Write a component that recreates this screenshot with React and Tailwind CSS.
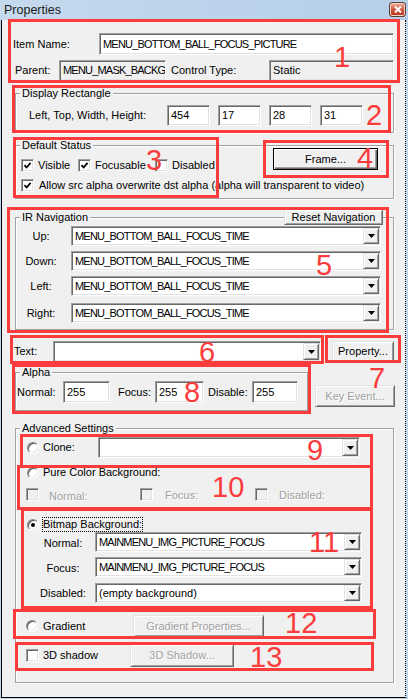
import React from "react";

const sunken =
  "border border-t-[#a0a0a0] border-l-[#a0a0a0] border-r-white border-b-white shadow-[inset_1px_1px_0_#696969,inset_-1px_-1px_0_#e3e3e3]";
const raised =
  "bg-[#f0f0f0] border border-t-[#e3e3e3] border-l-[#e3e3e3] border-r-[#696969] border-b-[#696969] shadow-[inset_1px_1px_0_#fff,inset_-1px_-1px_0_#a0a0a0]";
const disabledText = "text-[#a0a0a0] [text-shadow:1px_1px_0_#fff]";

function Edit({ className = "", ro = false, children }) {
  return (
    <div
      className={`${sunken} ${ro ? "bg-[#f0f0f0]" : "bg-white"} flex items-center pl-[3px] overflow-hidden whitespace-nowrap ${className}`}
    >
      {children}
    </div>
  );
}

function Arrow() {
  return (
    <div className={`${raised} w-[16px] shrink-0 flex items-center justify-center`}>
      <svg width="7" height="4" viewBox="0 0 7 4">
        <path d="M0 0h7L3.5 4z" fill="#000" />
      </svg>
    </div>
  );
}

function Combo({ className = "", children }) {
  return (
    <div className={`${sunken} bg-white flex items-stretch p-[1px] ${className}`}>
      <div className="flex-1 flex items-center pl-[2px] overflow-hidden whitespace-nowrap">
        {children}
      </div>
      <Arrow />
    </div>
  );
}

function Check({ checked = false, disabled = false }) {
  return (
    <div
      className={`w-[13px] h-[13px] shrink-0 ${sunken} ${disabled ? "bg-[#f0f0f0]" : "bg-white"} flex items-center justify-center`}
    >
      {checked && (
        <svg width="9" height="9" viewBox="0 0 9 9">
          <path d="M1.5 4.2 L3.6 6.5 L7.6 1.8" fill="none" stroke="#000" strokeWidth="1.8" />
        </svg>
      )}
    </div>
  );
}

function Radio({ selected = false }) {
  return (
    <div className="w-[12px] h-[12px] shrink-0 rounded-full bg-white border border-t-[#8a8a8a] border-l-[#8a8a8a] border-r-white border-b-white shadow-[inset_1px_1px_0_#555,inset_-1px_-1px_0_#e3e3e3] flex items-center justify-center">
      {selected && <div className="w-[4px] h-[4px] rounded-full bg-black" />}
    </div>
  );
}

function Button({ className = "", disabled = false, children }) {
  return (
    <div
      className={`${raised} flex items-center justify-center whitespace-nowrap ${disabled ? disabledText : ""} ${className}`}
    >
      {children}
    </div>
  );
}

function Group({ label, className = "", children }) {
  return (
    <div
      className={`relative border border-[#a0a0a0] shadow-[inset_1px_1px_0_#fff,1px_1px_0_#fff] ${className}`}
    >
      <span className="absolute left-[4px] -top-[8px] bg-[#f0f0f0] px-[2px] leading-[14px] whitespace-nowrap">
        {label}
      </span>
      {children}
    </div>
  );
}

const caps = "tracking-[-0.8px]";
const red = "absolute border-[3px] border-[#fb3c3c] pointer-events-none";
const num =
  "absolute text-[29px] leading-none text-[#fb3c3c] font-['Liberation_Sans',Arial,sans-serif] pointer-events-none";

export default function App() {
  return (
    <div className="relative w-[408px] h-[699px] overflow-hidden bg-[#bcd4ec] font-['Liberation_Sans',Arial,sans-serif] text-[11px] leading-[13px] text-black">
      {/* Title bar */}
      <div className="h-[20px] flex items-start justify-between pl-[4px] pr-[2px] bg-gradient-to-r from-[#c6daee] via-[#bcd3eb] to-[#b7cfe9]">
        <span className="mt-[3px] text-[12.5px] leading-[14px] text-[#1a1a1a]">Properties</span>
        <div className="mt-[2px] w-[17px] h-[15px] rounded-[3px] border border-[#5b4238] bg-gradient-to-b from-[#eab4a2] via-[#d4563f] to-[#b8321f] flex items-center justify-center shadow-[inset_0_0_0_1px_#f3d2c6]">
          <svg width="8" height="7" viewBox="0 0 8 7">
            <path d="M1 0.5 L7 6.5 M7 0.5 L1 6.5" stroke="#fff" strokeWidth="2" />
          </svg>
        </div>
      </div>

      {/* Dialog body */}
      <div className="ml-px w-[405px] h-[678px] bg-[#f0f0f0] border-l border-r border-b border-black [border-right-style:dotted] flex flex-col items-start">
        {/* Item Name */}
        <div className="mt-[13px] h-[22px] flex items-center">
          <span className="ml-[11px] w-[86px]">Item Name:</span>
          <Edit className={`w-[295px] h-[22px] ${caps}`}>MENU_BOTTOM_BALL_FOCUS_PICTURE</Edit>
        </div>
        {/* Parent / Control type */}
        <div className="mt-[5px] h-[21px] flex items-center">
          <span className="ml-[13px] w-[44px]">Parent:</span>
          <Edit ro className={`w-[107px] h-[21px] pl-[2px] ${caps}`}>MENU_MASK_BACKG</Edit>
          <span className="ml-[5px] w-[98px]">Control Type:</span>
          <Edit ro className="w-[125px] h-[21px]">Static</Edit>
        </div>

        {/* Display Rectangle */}
        <Group label="Display Rectangle" className="mt-[12px] ml-[13px] w-[379px] h-[40px]">
          <div className="mt-[11px] h-[21px] flex items-center">
            <span className="ml-[13px] w-[138px]">Left, Top, Width, Height:</span>
            <div className="flex gap-[8px]">
              <Edit className="w-[43px] h-[21px]">454</Edit>
              <Edit className="w-[43px] h-[21px]">17</Edit>
              <Edit className="w-[43px] h-[21px]">28</Edit>
              <Edit className="w-[43px] h-[21px]">31</Edit>
            </div>
          </div>
        </Group>

        {/* Default Status */}
        <Group label="Default Status" className="mt-[12px] ml-[13px] w-[379px] h-[54px]">
          <div className="flex items-start">
            <div className="mt-[13px] ml-[5px] h-[13px] flex items-center">
              <div className="w-[57px] flex items-center gap-[4px]">
                <Check checked />
                <span>Visible</span>
              </div>
              <div className="w-[77px] flex items-center gap-[4px]">
                <Check checked />
                <span>Focusable</span>
              </div>
              <div className="flex items-center gap-[4px]">
                <Check />
                <span>Disabled</span>
              </div>
            </div>
            <div className="ml-auto mr-[15px] mt-[2px] w-[105px] h-[22px] flex items-center justify-center bg-[#f0f0f0] border border-black shadow-[inset_1px_1px_0_#fff,inset_-1px_-1px_0_#696969,inset_-2px_-2px_0_#a0a0a0]">
              Frame...
            </div>
          </div>
          <div className="mt-[7px] ml-[5px] h-[13px] flex items-center gap-[5px]">
            <Check checked />
            <span className="whitespace-nowrap">
              Allow src alpha overwrite dst alpha (alpha will transparent to video)
            </span>
          </div>
        </Group>

        {/* IR Navigation */}
        <Group label="IR Navigation" className="mt-[18px] ml-[13px] w-[379px] h-[113px]">
          <Button className="absolute left-[268px] -top-[9px] w-[99px] h-[16px]">Reset Navigation</Button>
          <div className="mt-[8px] h-[20px] flex items-center">
            <span className="w-[50px] text-center">Up:</span>
            <Combo className={`ml-[5px] w-[310px] h-[20px] ${caps}`}>MENU_BOTTOM_BALL_FOCUS_TIME</Combo>
          </div>
          <div className="mt-[5px] h-[20px] flex items-center">
            <span className="w-[50px] text-center">Down:</span>
            <Combo className={`ml-[5px] w-[310px] h-[20px] ${caps}`}>MENU_BOTTOM_BALL_FOCUS_TIME</Combo>
          </div>
          <div className="mt-[5px] h-[20px] flex items-center">
            <span className="w-[50px] text-center">Left:</span>
            <Combo className={`ml-[5px] w-[310px] h-[20px] ${caps}`}>MENU_BOTTOM_BALL_FOCUS_TIME</Combo>
          </div>
          <div className="mt-[7px] h-[20px] flex items-center">
            <span className="w-[50px] text-center">Right:</span>
            <Combo className={`ml-[5px] w-[310px] h-[20px] ${caps}`}>MENU_BOTTOM_BALL_FOCUS_TIME</Combo>
          </div>
        </Group>

        {/* Text row */}
        <div className="mt-[11px] h-[21px] flex items-center">
          <span className="ml-[12px] w-[39px]">Text:</span>
          <Combo className="w-[268px] h-[21px]"> </Combo>
          <Button className="ml-[11px] w-[62px] h-[21px]">Property...</Button>
        </div>

        {/* Alpha + key event */}
        <div className="mt-[10px] flex items-start">
          <Group label="Alpha" className="ml-[13px] w-[293px] h-[39px]">
            <div className="mt-[8px] h-[22px] flex items-center">
              <span className="ml-[1px] w-[46px]">Normal:</span>
              <Edit className="w-[47px] h-[22px]">255</Edit>
              <span className="ml-[8px] w-[37px]">Focus:</span>
              <Edit className="w-[49px] h-[22px]">255</Edit>
              <span className="ml-[4px] w-[44px]">Disable:</span>
              <Edit className="w-[46px] h-[22px]">255</Edit>
            </div>
          </Group>
          <Button disabled className="ml-[7px] mt-[13px] w-[80px] h-[22px]">Key Event...</Button>
        </div>

        {/* Advanced Settings */}
        <Group label="Advanced Settings" className="mt-[17px] ml-[13px] w-[379px] h-[255px]">
          <div className="mt-[8px] h-[21px] flex items-center">
            <div className="ml-[11px]"><Radio /></div>
            <span className="ml-[4px] w-[55px]">Clone:</span>
            <Combo className="w-[262px] h-[21px]"> </Combo>
          </div>
          <div className="mt-[8px] h-[13px] flex items-center">
            <div className="ml-[11px]"><Radio /></div>
            <span className="ml-[4px]">Pure Color Background:</span>
          </div>
          <div className="mt-[9px] h-[13px] flex items-center">
            <div className="ml-[10px] w-[114px] flex items-center gap-[10px]">
              <Check disabled />
              <span className={`pt-[3px] ${disabledText}`}>Normal:</span>
            </div>
            <div className="w-[115px] flex items-center gap-[12px]">
              <Check disabled />
              <span className={`pt-[1px] ${disabledText}`}>Focus:</span>
            </div>
            <div className="flex items-center gap-[11px]">
              <Check disabled />
              <span className={`pt-[2px] ${disabledText}`}>Disabled:</span>
            </div>
          </div>
          <div className="mt-[16px] h-[15px] flex items-center">
            <div className="ml-[11px]"><Radio selected /></div>
            <span className="ml-[3px] h-[15px] flex items-center border border-dotted border-black">
              Bitmap Background:
            </span>
          </div>
          <div className="h-[20px] flex items-center">
            <span className="ml-[24px] w-[46px] text-center pt-[3px]">Normal:</span>
            <Combo className={`ml-[9px] w-[267px] h-[20px] ${caps}`}>MAINMENU_IMG_PICTURE_FOCUS</Combo>
          </div>
          <div className="mt-[5px] h-[20px] flex items-center">
            <span className="ml-[24px] w-[46px] text-center pt-[3px]">Focus:</span>
            <Combo className={`ml-[9px] w-[267px] h-[20px] ${caps}`}>MAINMENU_IMG_PICTURE_FOCUS</Combo>
          </div>
          <div className="mt-[6px] h-[20px] flex items-center">
            <span className="ml-[24px] w-[46px] text-center pt-[1px]">Disabled:</span>
            <Combo className="ml-[9px] w-[267px] h-[20px]">(empty background)</Combo>
          </div>
          <div className="mt-[12px] h-[22px] flex items-center">
            <div className="ml-[10px]"><Radio /></div>
            <span className="ml-[5px] w-[90px]">Gradient</span>
            <Button disabled className="w-[131px] h-[22px]">Gradient Properties...</Button>
          </div>
          <div className="mt-[7px] h-[23px] flex items-center">
            <div className="ml-[10px]"><Check /></div>
            <span className="ml-[4px] w-[87px]">3D shadow</span>
            <Button disabled className="w-[104px] h-[23px]">3D Shadow...</Button>
          </div>
        </Group>
      </div>

      {/* Red annotation boxes */}
      <div className={`${red} left-[8px] top-[19px] w-[392px] h-[64px]`} />
      <div className={`${red} left-[12px] top-[85px] w-[379px] h-[48px]`} />
      <div className={`${red} left-[13px] top-[137px] w-[206px] h-[61px]`} />
      <div className={`${red} left-[263px] top-[140px] w-[126px] h-[38px]`} />
      <div className={`${red} left-[7px] top-[207px] w-[382px] h-[126px]`} />
      <div className={`${red} left-[10px] top-[335px] w-[314px] h-[29px]`} />
      <div className={`${red} left-[325px] top-[335px] w-[76px] h-[28px]`} />
      <div className={`${red} left-[12px] top-[364px] w-[299px] h-[50px]`} />
      <div className={`${red} left-[20px] top-[434px] w-[353px] h-[34px]`} />
      <div className={`${red} left-[17px] top-[465px] w-[356px] h-[45px]`} />
      <div className={`${red} left-[21px] top-[508px] w-[352px] h-[101px]`} />
      <div className={`${red} left-[13px] top-[609px] w-[363px] h-[30px]`} />
      <div className={`${red} left-[15px] top-[642px] w-[359px] h-[29px]`} />

      {/* Red numbers */}
      <span className={`${num} left-[334px] top-[43px]`}>1</span>
      <span className={`${num} left-[366px] top-[101px]`}>2</span>
      <span className={`${num} left-[146px] top-[146px]`}>3</span>
      <span className={`${num} left-[357px] top-[144px]`}>4</span>
      <span className={`${num} left-[316px] top-[251px]`}>5</span>
      <span className={`${num} left-[199px] top-[338px]`}>6</span>
      <span className={`${num} left-[369px] top-[364px]`}>7</span>
      <span className={`${num} left-[184px] top-[378px]`}>8</span>
      <span className={`${num} left-[307px] top-[436px]`}>9</span>
      <span className={`${num} left-[212px] top-[473px]`}>10</span>
      <span className={`${num} left-[309px] top-[528px]`}>11</span>
      <span className={`${num} left-[285px] top-[609px]`}>12</span>
      <span className={`${num} left-[250px] top-[643px]`}>13</span>
    </div>
  );
}
